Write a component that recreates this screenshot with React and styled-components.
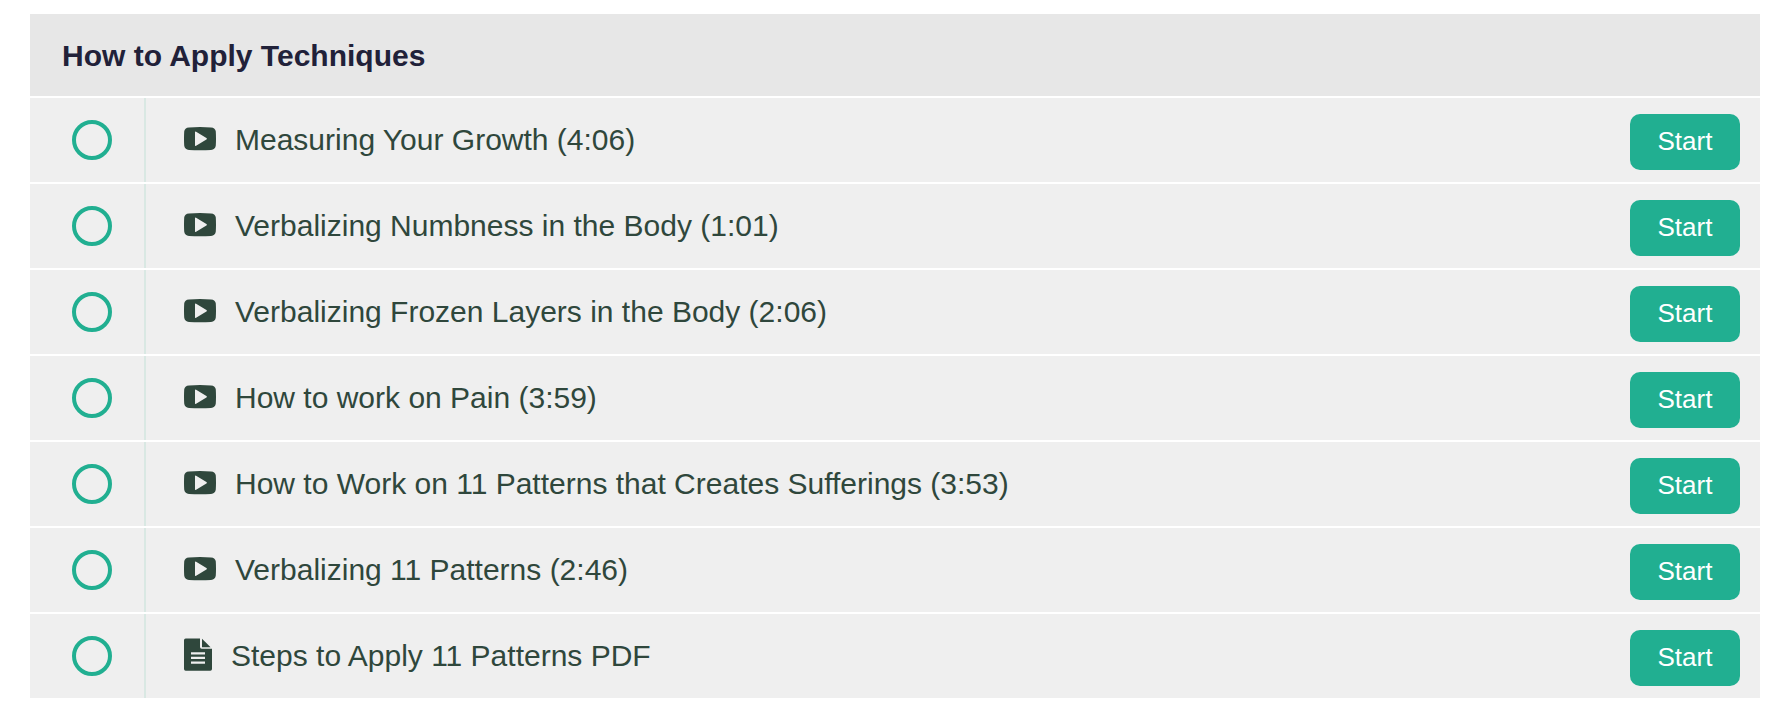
import React from 'react';
import styled, { createGlobalStyle } from 'styled-components';

const lectures = [
  { id: 1, type: 'video', title: 'Measuring Your Growth (4:06)' },
  { id: 2, type: 'video', title: 'Verbalizing Numbness in the Body (1:01)' },
  { id: 3, type: 'video', title: 'Verbalizing Frozen Layers in the Body (2:06)' },
  { id: 4, type: 'video', title: 'How to work on Pain (3:59)' },
  {
    id: 5,
    type: 'video',
    title: 'How to Work on 11 Patterns that Creates Sufferings (3:53)'
  },
  { id: 6, type: 'video', title: 'Verbalizing 11 Patterns (2:46)' },
  { id: 7, type: 'file', title: 'Steps to Apply 11 Patterns PDF' }
];

function VideoIcon() {
  return (
    <StyledIcon width="32" height="24" viewBox="0 0 32 24" aria-hidden="true">
      <path
        fillRule="evenodd"
        d="M5 .4Q16 -.2 27 .4Q31.4 .6 31.8 4.6Q32.2 12 31.8 18.6Q31.4 22.6 27 22.9Q16 23.4 5 22.9Q.6 22.6 .2 18.6Q-.2 12 .2 4.6Q.6 .6 5 .4ZM11 5.2V18.2Q11 19.4 12.1 18.7L22.4 12.5Q23.3 11.7 22.4 11L12.1 4.7Q11 4 11 5.2Z"
      />
    </StyledIcon>
  );
}

function FileIcon() {
  return (
    <StyledIcon width="28" height="34" viewBox="0 0 28 34" aria-hidden="true">
      <path
        fillRule="evenodd"
        d="M1.7 .5H16V9Q16 10.7 17.7 10.7H28V31Q28 32.7 26.3 32.7H1.7Q0 32.7 0 31V2.2Q0 .5 1.7 .5ZM7 14.2V16.5H21V14.2ZM7 18.8V21.1H21V18.8ZM7 23.5V25.8H21V23.5Z"
      />
      <path d="M18 .8V9.2H26.6Z" />
    </StyledIcon>
  );
}

function App() {
  return (
    <StyledSection>
      <GlobalStyle />
      <StyledHeading>How to Apply Techniques</StyledHeading>
      <StyledList>
        {lectures.map(lecture => (
          <StyledRow key={lecture.id}>
            <StyledStatus>
              <StyledCircle role="img" aria-label="Not started" />
            </StyledStatus>
            <StyledLink href={`#lecture-${lecture.id}`}>
              {lecture.type === 'video' ? <VideoIcon /> : <FileIcon />}
              <StyledTitle>{lecture.title}</StyledTitle>
            </StyledLink>
            <StyledButton type="button">Start</StyledButton>
          </StyledRow>
        ))}
      </StyledList>
    </StyledSection>
  );
}

const GlobalStyle = createGlobalStyle`
  body {
    margin: 0;
    background: #fff;
    font-family: 'Liberation Sans', Arial, sans-serif;
  }
`;
const StyledSection = styled.section`
  margin: 14px 26px 22px 30px;
`;
const StyledHeading = styled.h2`
  margin: 0;
  padding: 25px 32px 23px;
  background: #e7e7e7;
  color: #212139;
  font-size: 30px;
  line-height: 34px;
`;
const StyledList = styled.ul`
  margin: 0;
  padding: 0;
  list-style: none;
`;
const StyledRow = styled.li`
  display: flex;
  align-items: center;
  min-height: 84px;
  margin-top: 2px;
  padding-right: 20px;
  background: #efefef;
`;
const StyledStatus = styled.div`
  display: flex;
  align-items: center;
  align-self: stretch;
  padding: 0 32px 0 42px;
  border-right: 2px solid #d9e8e3;
`;
const StyledCircle = styled.span`
  box-sizing: border-box;
  width: 40px;
  height: 40px;
  border: 4px solid #21af91;
  border-radius: 50%;
`;
const StyledLink = styled.a`
  display: flex;
  flex: 1;
  align-items: center;
  gap: 19px;
  padding: 0 38px;
  color: #2f473c;
  text-decoration: none;
`;
const StyledIcon = styled.svg`
  flex: none;
  margin-bottom: 2px;
  fill: #2f473c;
`;
const StyledTitle = styled.span`
  font-size: 30px;
  line-height: 36px;
`;
const StyledButton = styled.button`
  min-width: 110px;
  margin-top: 4px;
  padding: 11px 20px 13px;
  border: 0;
  border-radius: 10px;
  background: #21af91;
  color: #fff;
  font-family: inherit;
  font-size: 26px;
  line-height: 32px;
  cursor: pointer;
`;

export default App;
